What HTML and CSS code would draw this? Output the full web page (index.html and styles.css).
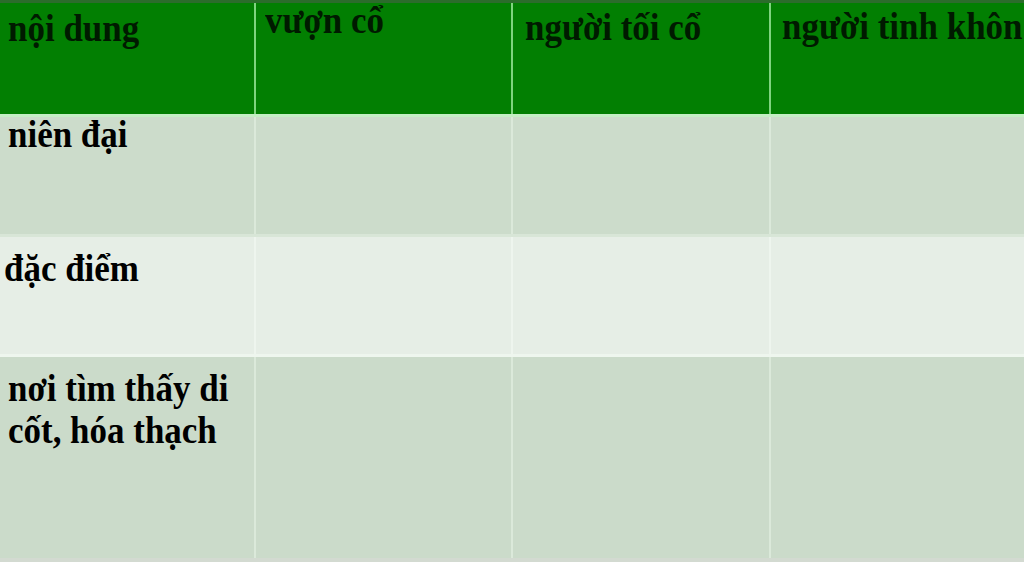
FILE: index.html
```html
<!DOCTYPE html>
<html lang="vi">
<head>
<meta charset="utf-8">
<title>Bảng so sánh</title>
<link rel="stylesheet" href="styles.css">
</head>
<body>
<div class="table">
  <div class="row head">
    <div class="cell c1"><span class="txt">nội dung</span></div>
    <div class="cell c2"><span class="txt short">vượn cổ</span></div>
    <div class="cell c3"><span class="txt">người tối cổ</span></div>
    <div class="cell c4"><span class="txt">người tinh khôn</span></div>
  </div>
  <div class="row r1">
    <div class="cell c1"><span class="txt short">niên đại</span></div>
    <div class="cell c2"></div>
    <div class="cell c3"></div>
    <div class="cell c4"></div>
  </div>
  <div class="row r2">
    <div class="cell c1"><span class="txt">đặc điểm</span></div>
    <div class="cell c2"></div>
    <div class="cell c3"></div>
    <div class="cell c4"></div>
  </div>
  <div class="row r3">
    <div class="cell c1"><span class="txt">nơi tìm thấy di<br>cốt, hóa thạch</span></div>
    <div class="cell c2"></div>
    <div class="cell c3"></div>
    <div class="cell c4"></div>
  </div>
</div>
</body>
</html>
```

FILE: styles.css
```css
* { box-sizing: border-box; }
html, body { margin: 0; padding: 0; }
body {
  width: 1024px;
  height: 562px;
  overflow: hidden;
  background: #cbdbca;
  font-family: "Liberation Serif", "Times New Roman", serif;
  color: #000;
}
.table {
  display: flex;
  flex-direction: column;
  width: 1024px;
  height: 562px;
}
.row {
  display: grid;
  grid-template-columns: 254px 257px 258px 255px;
}
.c2, .c3, .c4 { border-left: 2px solid transparent; }

.head {
  height: 117px;
  background: #027f02;
  border-top: 3px solid #2c6c2c;
  border-bottom: 3px solid #c4efc4;
}
.head .txt { color: #001a00; }
.head .c2, .head .c3, .head .c4 { border-left-color: #7fd47f; }

.r1 {
  height: 120px;
  background: #ccdccb;
  border-bottom: 3px solid #d8e6d7;
}
.r1 .c2, .r1 .c3, .r1 .c4 { border-left-color: #dbe9da; }

.r2 {
  height: 120px;
  background: #e6eee6;
  border-bottom: 3px solid #eef6ee;
}
.r2 .c2, .r2 .c3, .r2 .c4 { border-left-color: #eef5ee; }

.r3 {
  flex: 1;
  background: #cbdbca;
  border-bottom: 4px solid #d3dad1;
}
.r3 .c2, .r3 .c3, .r3 .c4 { border-left-color: #dbe9da; }

.txt {
  display: block;
  font-weight: bold;
  font-size: 38px;
  line-height: 42px;
  white-space: nowrap;
  transform: scaleX(0.92);
  transform-origin: 0 0;
}
.txt.short { line-height: 34px; }

.head .c1 { padding: 4px 0 0 8px; }
.head .c2 { padding: 0 0 0 9px; }
.head .c3 { padding: 3px 0 0 12px; }
.head .c4 { padding: 2px 0 0 11px; }

.r1 .c1 { padding: 0 0 0 8px; }
.r2 .c1 { padding: 10px 0 0 4px; }
.r3 .c1 { padding: 10px 0 0 8px; }
```
